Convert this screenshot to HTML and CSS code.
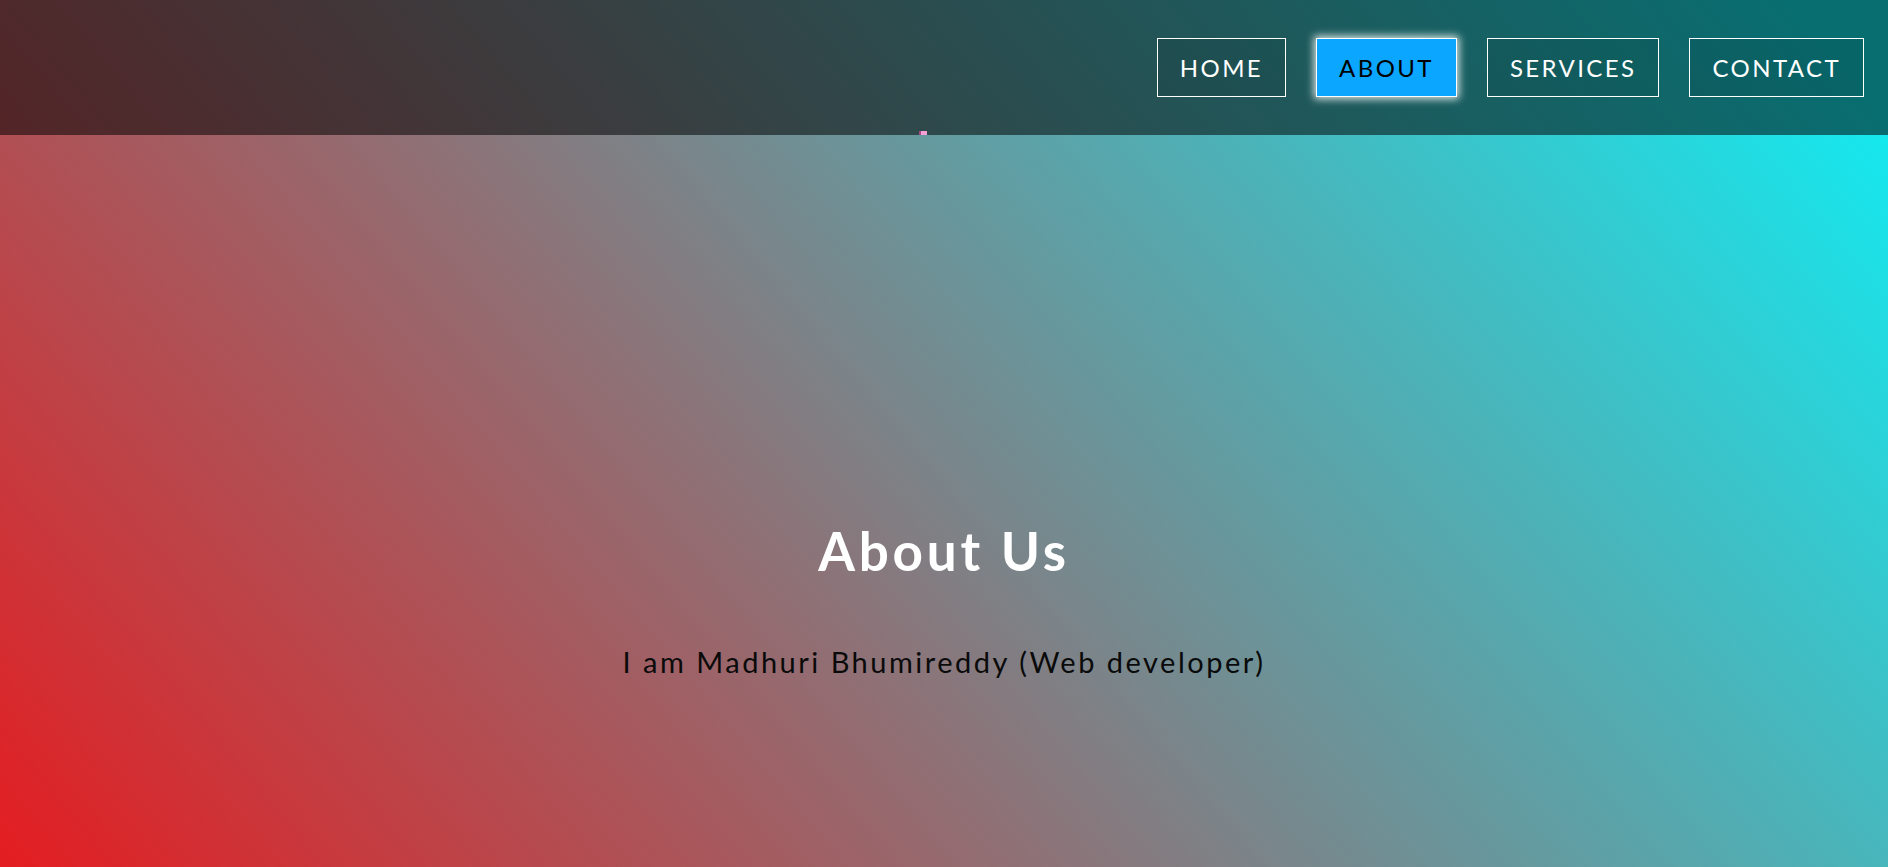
FILE: index.html
```html
<!DOCTYPE html>
<html lang="en">
<head>
<meta charset="utf-8">
<title>About</title>
<link rel="stylesheet" href="styles.css">
</head>
<body>
<header class="topbar">
  <span class="peek"></span>
  <nav class="nav">
    <a class="nav-link" href="#">HOME</a>
    <a class="nav-link active" href="#">ABOUT</a>
    <a class="nav-link" href="#">SERVICES</a>
    <a class="nav-link" href="#">CONTACT</a>
  </nav>
</header>
<main class="about">
  <h1 class="about-title">About Us</h1>
  <p class="about-text">I am Madhuri Bhumireddy (Web developer)</p>
</main>
</body>
</html>
```

FILE: styles.css
```css
html, body {
  margin: 0;
  padding: 0;
  height: 100%;
}
body {
  font-family: "Lato", "Open Sans", sans-serif;
  background: linear-gradient(50deg, #e41d21 0%, #14e9ef 96%);
  overflow: hidden;
  display: flex;
  flex-direction: column;
}
.topbar {
  position: relative;
  height: 135px;
  flex: 0 0 135px;
  background: rgba(0, 0, 0, 0.53);
  display: flex;
  align-items: center;
  justify-content: flex-end;
  padding-right: 24px;
  box-sizing: border-box;
}
.peek {
  position: absolute;
  left: 919px;
  bottom: 0;
  width: 8px;
  height: 4px;
  background: #f2a0d6;
  border-left: 2px solid #a24a86;
  box-sizing: border-box;
}
.nav {
  display: flex;
  gap: 30px;
  margin-top: -1px;
}
.nav-link {
  display: flex;
  align-items: center;
  justify-content: center;
  height: 59px;
  box-sizing: border-box;
  padding: 0 22px;
  border: 1px solid #ffffff;
  color: #ffffff;
  text-decoration: none;
  font-size: 24px;
  letter-spacing: 2.4px;
  background: rgba(0, 0, 0, 0.08);
}
.nav-link.active {
  background: #0ba6ff;
  color: #000000;
  box-shadow: 0 0 8px 2px rgba(255, 255, 255, 0.85);
}
.about {
  flex: 1;
  display: flex;
  flex-direction: column;
  align-items: center;
  padding-top: 384px;
  gap: 62px;
}
.about-title {
  margin: 0;
  font-size: 53px;
  line-height: 1.2;
  font-weight: 700;
  color: #ffffff;
  letter-spacing: 3.8px;
}
.about-text {
  margin: 0;
  font-size: 29px;
  line-height: 1.2;
  color: #0a0a0a;
  letter-spacing: 2.5px;
}
```
